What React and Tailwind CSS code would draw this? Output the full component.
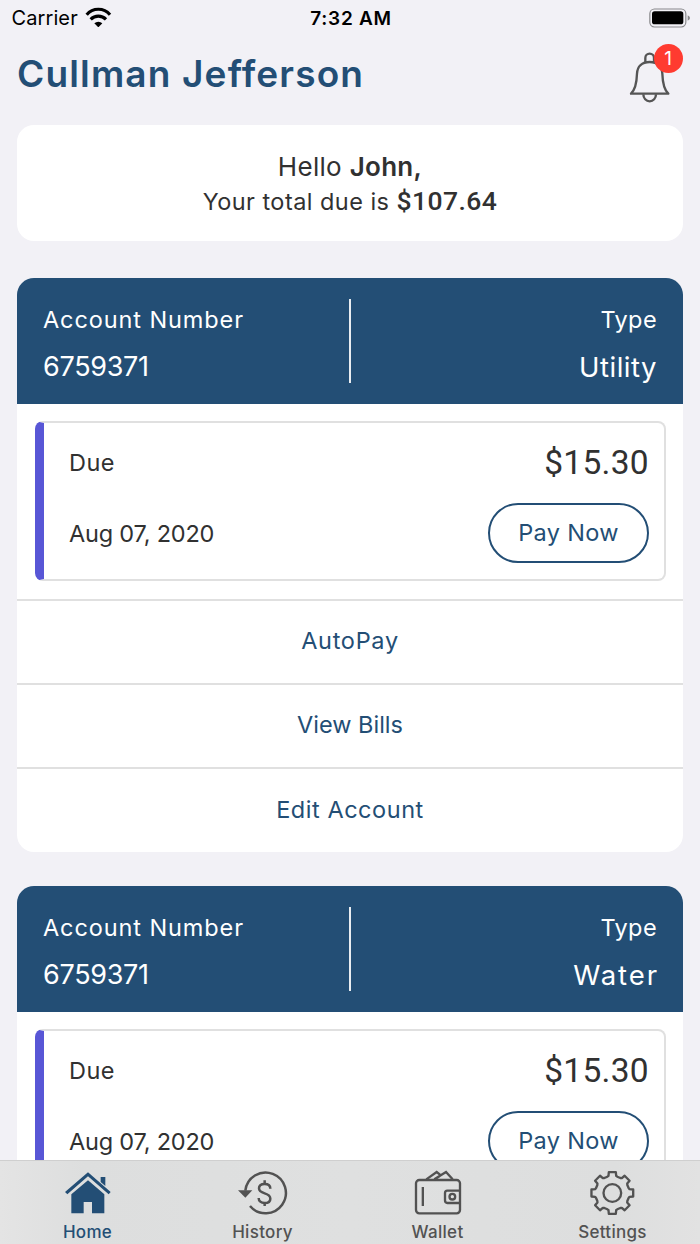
const accounts = [
    { id: 1, number: '6759371', type: 'Utility', typeClass: 'tracking-[0.5px]', due: '$15.30', date: 'Aug 07, 2020', expanded: true },
    { id: 2, number: '6759371', type: 'Water', typeClass: 'tracking-[1.9px] -mr-[1.9px]', due: '$15.30', date: 'Aug 07, 2020', expanded: false },
]

const actions = [
    { label: 'AutoPay', className: 'tracking-[0.7px]' },
    { label: 'View Bills', className: 'tracking-[0px]' },
    { label: 'Edit Account', className: 'tracking-[0.55px]' },
]

function WifiIcon() {
    return (
        <svg viewBox="252 18 81 62" className="w-[27px] h-[20.67px] relative -top-px" fill="none" stroke="#000" strokeWidth="9.5">
            <path d="M257 41A46 46 0 0 1 327 41" />
            <path d="M269 55A32 32 0 0 1 315 55" />
            <path d="M280 67A17 17 0 0 1 304 67L292 79Z" fill="#000" stroke="none" />
        </svg>
    )
}

function BatteryIcon() {
    return (
        <svg viewBox="149 22 124 60" className="w-[41.33px] h-5">
            <rect x="151.5" y="25" width="108" height="54" rx="14" fill="none" stroke="#88888b" strokeWidth="3.5" />
            <rect x="158" y="32" width="94" height="39" rx="8" fill="#000" />
            <path d="M265 44q7 3 7 8t-7 8z" fill="#88888b" />
        </svg>
    )
}

function BellIcon() {
    return (
        <svg viewBox="86 154 124 158" className="w-[41.33px] h-[52.67px]" fill="none" stroke="#555" strokeWidth="7" strokeLinejoin="round">
            <path d="M135 189v-14a13 13 0 0 1 26 0v14" />
            <path d="M92 282C105 270 109 252 110 222C111 200 125 187 148 187C171 187 185 200 186 222C187 252 191 270 204 282Z" />
            <path d="M129 284a19 21 0 0 0 38 0" />
        </svg>
    )
}

function HomeIcon() {
    return (
        <svg viewBox="189 60 150 138" className="w-[50px] h-[46px]" fill="currentColor">
            <path d="M264 67L332 126L326 133L264 79L202 133L195 126Z" />
            <path d="M302 81H316V108L302 96Z" />
            <path d="M264 91L313 133V190H276V156H251V190H214V133Z" />
        </svg>
    )
}

function HistoryIcon() {
    return (
        <svg viewBox="714 60 150 138" className="w-[50px] h-[46px]" fill="none" stroke="currentColor" strokeWidth="7.5">
            <path d="M736 122A61 61 0 1 1 750 168" />
            <path d="M714 121H757L736 143Z" fill="currentColor" stroke="none" />
            <path d="M794 91V102M794 158V168" />
            <path d="M811 116C811 107 804 102 794 102C784 102 777 107 777 115C777 124 784 127 794 130C804 133 811 137 811 146C811 154 804 159 794 159C783 159 776 153 776 144" />
        </svg>
    )
}

function WalletIcon() {
    return (
        <svg viewBox="189 60 150 138" className="w-[50px] h-[46px]" fill="none" stroke="currentColor" strokeWidth="7">
            <rect x="198" y="90" width="132" height="100" rx="10" />
            <path d="M218.500 111V168" />
            <path d="M330 122H292q-7 0-7 7v22q0 8 7 8H330" />
            <circle cx="307" cy="140" r="8.500" />
            <path d="M229 88L260 66L270 74M253 88L288 66L308 88M258 86L269 78" />
        </svg>
    )
}

// 8 teeth around 787,129
function gearPath() {
    const points = []
    for (let i = 0; i < 8; i++) {
        const base = i * 45
        for (const [r, a] of [[51, -17], [53, -12.5], [63.5, -9.5], [63.5, 9.5], [53, 12.5], [51, 17]]) {
            const t = ((base + a - 90) * Math.PI) / 180
            points.push(`${(787 + r * Math.cos(t)).toFixed(1)} ${(129 + r * Math.sin(t)).toFixed(1)}`)
        }
    }
    return `M${points.join('L')}Z`
}

function SettingsIcon() {
    return (
        <svg viewBox="714 60 150 138" className="w-[50px] h-[46px]" fill="none" stroke="currentColor" strokeWidth="7" strokeLinejoin="round">
            <path d={gearPath()} />
            <circle cx="787" cy="129" r="26.500" />
        </svg>
    )
}

const tabs = [
    { label: 'Home', icon: HomeIcon, className: 'text-[#234e75]' },
    { label: 'History', icon: HistoryIcon, className: 'text-[#525252]' },
    { label: 'Wallet', icon: WalletIcon, className: 'text-[#525252]' },
    { label: 'Settings', icon: SettingsIcon, className: 'text-[#525252]' },
]

function StatusBar() {
    return (
        <div className="h-9 pl-[11.5px] pr-[9.5px] grid grid-cols-3 items-center text-black">
            <div className="flex items-center gap-[7px]">
                <span className="text-[20px] leading-6 tracking-[0.1px]">Carrier</span>
                <WifiIcon />
            </div>
            <span className="pt-px text-center text-[19px] leading-6 font-semibold tracking-[0.7px]">7:32 AM</span>
            <div className="flex justify-end">
                <BatteryIcon />
            </div>
        </div>
    )
}

function AccountCard({ account }) {
    return (
        <section className="bg-white rounded-[17px] overflow-hidden shrink-0">
            <div className="h-[126px] bg-[#234e75] text-white px-[26px] pt-[5px] flex items-center justify-between">
                <div className="flex-1">
                    <p className="text-[23.5px] leading-[47px] tracking-[0.9px]">Account Number</p>
                    <p className="text-[27px] leading-[48px] tracking-[-0.3px]">{account.number}</p>
                </div>
                <div className="w-[1.5px] h-[84px] -mt-[5px] bg-white/90" />
                <div className="flex-1 text-right">
                    <p className="text-[23.5px] leading-[47px] tracking-[0.4px]">Type</p>
                    <p className={`text-[27.5px] leading-[48px] ${account.typeClass}`}>{account.type}</p>
                </div>
            </div>
            <div className="pt-[17px] pb-[17.5px] pl-[18px] pr-[17px]">
                <div className="h-[160px] rounded-[8px] border-2 border-[#e0e0e0] border-l-[9px] border-l-[#5856d6] overflow-hidden text-[#313131] pl-[25px] pr-[15px] pt-[18px]">
                    <div className="h-[44px] flex items-center justify-between">
                        <span className="text-[23.5px] tracking-[0.5px]">Due</span>
                        <span className="text-[33.5px] font-[family-name:Roboto] tracking-[0.3px]">{account.due}</span>
                    </div>
                    <div className="mt-[18px] flex items-center justify-between">
                        <span className="text-[23.5px] tracking-[-0.2px] pt-px">{account.date}</span>
                        <button className="w-[161px] h-[60px] rounded-full border-2 border-[#234e75] text-[#234e75] text-[23.5px] tracking-[0.3px]">
                            Pay Now
                        </button>
                    </div>
                </div>
            </div>
            {account.expanded && actions.map((action) => (
                <button
                    key={action.label}
                    className={`w-full h-[84.4px] border-t-2 border-[#e0e0e0] pb-0.5 text-[#234e75] text-[23.5px] block ${action.className}`}
                >
                    {action.label}
                </button>
            ))}
        </section>
    )
}

function TabBar() {
    return (
        <nav className="h-[84px] shrink-0 border-t border-[#cfcfcf] bg-[linear-gradient(90deg,#e4e4e4,#dddede_12%,#dfe0e0_50%,#dddede_88%,#e2e2e2)] grid grid-cols-4">
            {tabs.map(({ label, icon: Icon, className }) => (
                <a key={label} className={`flex flex-col items-center pt-[9px] ${className}`}>
                    <Icon />
                    <span className="text-[17px] leading-6 mt-[3.5px] font-medium tracking-[0.3px]">{label}</span>
                </a>
            ))}
        </nav>
    )
}

export default function App() {
    return (
        <div className="w-[700px] h-[1244px] bg-[#f2f1f6] font-['Inter',sans-serif] flex flex-col overflow-hidden">
            <StatusBar />
            <header className="h-[89px] shrink-0 pl-[17px] pr-[30px] flex justify-between items-start">
                <h1 className="mt-4 text-[37px] leading-[44px] font-semibold tracking-[1.15px] text-[#234e75] whitespace-nowrap">
                    Cullman Jefferson
                </h1>
                <div className="relative mt-[15px]">
                    <BellIcon />
                    <span className="absolute -top-[7px] left-[25px] size-[29px] rounded-full bg-[#ff3b30] text-white text-[19px] leading-[29px] text-center">
                        1
                    </span>
                </div>
            </header>
            <main className="flex-1 min-h-0 overflow-hidden px-[17px] flex flex-col">
                <section className="h-[115.5px] shrink-0 bg-white rounded-[17px] pt-6 text-center text-[#313131]">
                    <p className="text-[26px] leading-9 tracking-[0.3px]">
                        Hello <b className="font-semibold">John,</b>
                    </p>
                    <p className="text-[23.5px] leading-9 -mt-0.5 tracking-[0.45px]">
                        Your total due is <b className="font-[family-name:Roboto] font-medium text-[26.5px]">$107.64</b>
                    </p>
                </section>
                <div className="mt-[37.5px] flex flex-col gap-[34px]">
                    {accounts.map((account) => (
                        <AccountCard key={account.id} account={account} />
                    ))}
                </div>
            </main>
            <TabBar />
        </div>
    )
}
